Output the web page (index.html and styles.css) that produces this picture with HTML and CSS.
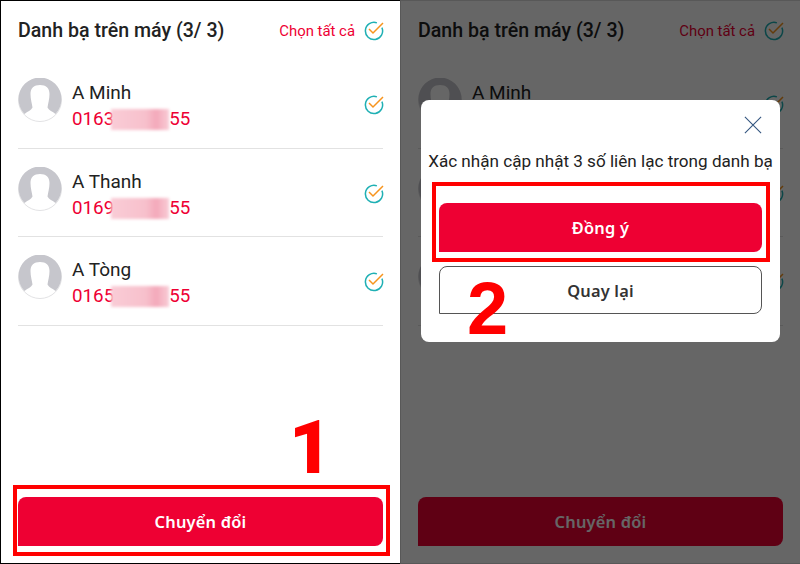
FILE: index.html
```html
<!DOCTYPE html>
<html lang="vi">
<head>
  <meta charset="UTF-8">
  <title>Danh bạ trên máy</title>
  <link rel="stylesheet" href="styles.css">
</head>
<body>
  <svg class="defs" width="0" height="0">
    <symbol id="check" viewBox="0 0 20 20">
      <path d="M17.900 6.600A8.600 8.600 0 1 1 12.900 1.900" fill="none" stroke="#1fb0b4" stroke-width="1.500"/>
      <path d="M5 8l4 4L19 2" fill="none" stroke="#f7941d" stroke-width="1.500"/>
    </symbol>
    <symbol id="avatar" viewBox="0 0 44 44">
      <circle cx="22" cy="22" r="21.500" fill="#fff" stroke="#e2e2e4"/>
      <path d="M.6 21A21.400 21.400 0 0 1 43.400 21C43.400 27 41 32.500 37.500 36C34.500 33.500 31 32.500 29.500 29.500C30 26 31.500 21 31.500 16C31.500 10 28 7 22 7S12.500 10 12.500 16C12.500 21 14 26 14.500 29.500C13 32.500 9.500 33.500 6.500 36C3 32.500.6 27 .6 21z" fill="#c6c6cc"/>
    </symbol>
  </svg>

  <div class="phone">
    <div class="header">
      <div class="title">Danh bạ trên máy (3/ 3)</div>
      <div class="select-all">Chọn tất cả</div>
      <svg class="check"><use href="#check"/></svg>
    </div>
    <div class="list">
      <div class="row">
        <svg class="avatar"><use href="#avatar"/></svg>
        <div class="info">
          <div class="name">A Minh</div>
          <div class="phone-no">0163<span class="smudge"></span>55</div>
        </div>
        <svg class="check"><use href="#check"/></svg>
      </div>
      <div class="row">
        <svg class="avatar"><use href="#avatar"/></svg>
        <div class="info">
          <div class="name">A Thanh</div>
          <div class="phone-no">0169<span class="smudge"></span>55</div>
        </div>
        <svg class="check"><use href="#check"/></svg>
      </div>
      <div class="row">
        <svg class="avatar"><use href="#avatar"/></svg>
        <div class="info">
          <div class="name">A Tòng</div>
          <div class="phone-no">0165<span class="smudge"></span>55</div>
        </div>
        <svg class="check"><use href="#check"/></svg>
      </div>
    </div>
    <div class="footer">
      <button class="btn btn-red">Chuyển đổi</button>
    </div>
    <div class="mark mark-convert"></div>
    <div class="step step-one">1</div>
  </div>

  <div class="phone phone-back">
    <div class="header">
      <div class="title">Danh bạ trên máy (3/ 3)</div>
      <div class="select-all">Chọn tất cả</div>
      <svg class="check"><use href="#check"/></svg>
    </div>
    <div class="list">
      <div class="row">
        <svg class="avatar"><use href="#avatar"/></svg>
        <div class="info">
          <div class="name">A Minh</div>
          <div class="phone-no">0163<span class="smudge"></span>55</div>
        </div>
        <svg class="check"><use href="#check"/></svg>
      </div>
      <div class="row">
        <svg class="avatar"><use href="#avatar"/></svg>
        <div class="info">
          <div class="name">A Thanh</div>
          <div class="phone-no">0169<span class="smudge"></span>55</div>
        </div>
        <svg class="check"><use href="#check"/></svg>
      </div>
      <div class="row">
        <svg class="avatar"><use href="#avatar"/></svg>
        <div class="info">
          <div class="name">A Tòng</div>
          <div class="phone-no">0165<span class="smudge"></span>55</div>
        </div>
        <svg class="check"><use href="#check"/></svg>
      </div>
    </div>
    <div class="footer">
      <button class="btn btn-red">Chuyển đổi</button>
    </div>
    <div class="dim"></div>
    <div class="dialog">
      <svg class="close" viewBox="0 0 20 20"><path d="M1 1l18 18M19 1L1 19" fill="none" stroke="#33557f" stroke-width="1.200"/></svg>
      <p class="dialog-text">Xác nhận cập nhật 3 số liên lạc trong danh bạ</p>
      <button class="btn btn-red">Đồng ý</button>
      <button class="btn btn-white">Quay lại</button>
      <div class="mark mark-agree"></div>
      <div class="step step-two">2</div>
    </div>
  </div>
</body>
</html>
```

FILE: styles.css
```css
body {
  margin: 0;
  display: flex;
  width: 800px;
  height: 564px;
  overflow: hidden;
  font-family: Roboto, "Liberation Sans", sans-serif;
  background: #fff;
}
.defs {
  position: absolute;
}
.phone {
  position: relative;
  box-sizing: border-box;
  width: 400px;
  height: 564px;
  display: flex;
  flex-direction: column;
  border: 1px solid #000;
  border-right: none;
  background: #fff;
}
.phone-back {
  border-color: #ddd;
}
.header {
  display: flex;
  align-items: center;
  height: 59px;
  padding: 0 17px;
}
.title {
  flex: 1;
  font-size: 19.6px;
  font-weight: 500;
  color: #222;
}
.select-all {
  margin-right: 9px;
  font-size: 14.9px;
  color: #ee0033;
}
.check {
  width: 20px;
  height: 20px;
  flex: none;
  margin: 17px -1px 0 0;
}
.header .check {
  margin-top: 0;
}
.list {
  flex: 1;
}
.row {
  display: flex;
  align-items: flex-start;
  height: 88.5px;
  margin: 0 17px;
  padding-top: 18px;
  border-bottom: 1px solid #e2e2e2;
  box-sizing: border-box;
}
.avatar {
  width: 44px;
  height: 44px;
  margin-right: 10px;
  flex: none;
}
.info {
  flex: 1;
  margin-top: 2px;
}
.name {
  font-size: 19px;
  line-height: 26px;
  color: #222;
}
.phone-no {
  display: flex;
  align-items: center;
  margin-top: 1px;
  font-size: 18.8px;
  line-height: 25px;
  color: #ee0033;
}
.smudge {
  width: 58px;
  height: 21px;
  margin-left: -3px;
  background: linear-gradient(90deg, #f9ccd6, #f7c0cc 60%, #f3a9ba 78%, #f9ccd6);
  filter: blur(1.5px);
}
.footer {
  padding: 0 17px 17px;
}
.btn {
  display: block;
  width: 100%;
  height: 49px;
  padding: 0;
  border: none;
  border-radius: 8px 8px 8px 0;
  font-family: "Noto Sans", sans-serif;
  font-size: 16.4px;
  font-weight: 600;
  letter-spacing: 0.2px;
}
.btn-red {
  background: #ee0033;
  color: #fff;
}
.btn-white {
  margin-top: 14px;
  height: 48px;
  background: #fff;
  border: 1px solid #555;
  color: #333;
}
.dim {
  position: absolute;
  inset: -1px 0 -1px -1px;
  background: rgba(0, 0, 0, 0.6);
}
.dialog {
  position: absolute;
  top: 99px;
  left: 20px;
  box-sizing: border-box;
  width: 359px;
  height: 242px;
  padding: 16px 18px 0;
  background: #fff;
  border-radius: 8px;
}
.close {
  display: block;
  width: 18px;
  height: 18px;
  margin: 0 0 0 auto;
}
.dialog-text {
  margin: 16px -18px 31px;
  text-align: center;
  font-size: 17.1px;
  line-height: 22px;
  color: #222;
  white-space: nowrap;
}
.mark {
  position: absolute;
  box-sizing: border-box;
  border: 4.5px solid #f00;
}
.mark-convert {
  left: 12px;
  top: 484px;
  width: 377px;
  height: 71px;
}
.mark-agree {
  left: 11px;
  top: 82px;
  width: 338px;
  height: 80px;
}
.step {
  position: absolute;
  font-family: "Liberation Sans", sans-serif;
  font-weight: 700;
  font-size: 74px;
  line-height: 74px;
  color: #f00;
}
.step-one {
  left: 288px;
  top: 410px;
  font-family: Roboto, sans-serif;
  font-weight: 900;
}
.step-two {
  left: 46px;
  top: 172px;
}
```
